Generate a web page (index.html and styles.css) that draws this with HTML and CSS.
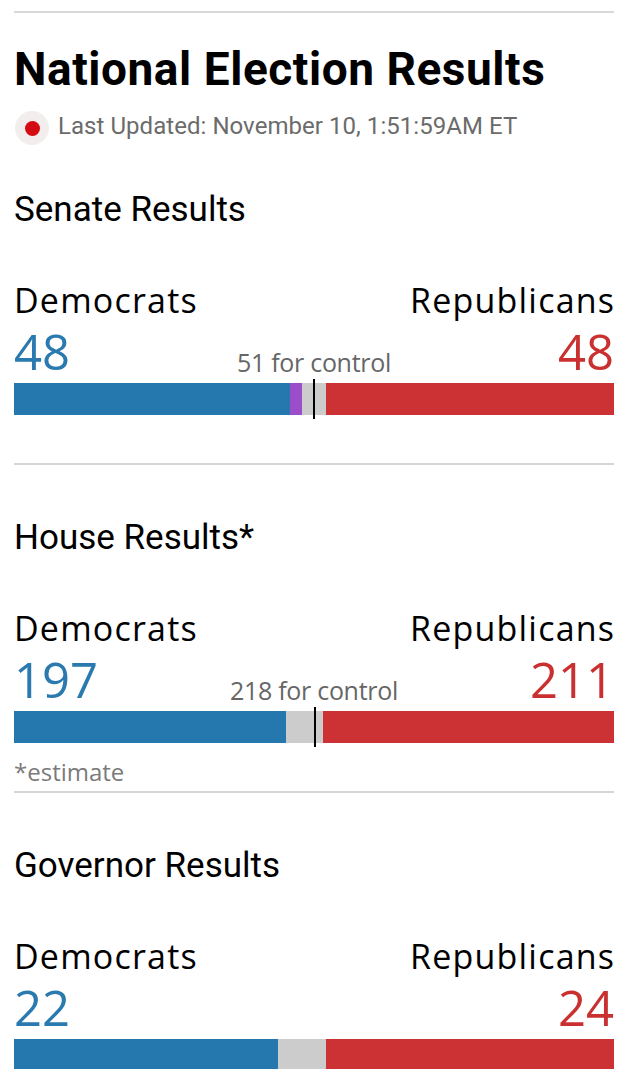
FILE: index.html
```html
<!DOCTYPE html>
<html lang="en">
<head>
<meta charset="utf-8">
<title>National Election Results</title>
<link rel="stylesheet" href="styles.css">
</head>
<body>
<main class="page">
  <div class="top-rule"></div>
  <h1 class="title">National Election Results</h1>
  <div class="updated"><span class="live-dot"></span><span class="updated-text">Last Updated: November 10, 1:51:59AM ET</span></div>

  <section class="race race-first">
    <h2 class="race-title">Senate Results</h2>
    <div class="parties"><span>Democrats</span><span>Republicans</span></div>
    <div class="counts">
      <span class="num dem-num">48</span>
      <span class="control">51 for control</span>
      <span class="num rep-num">48</span>
    </div>
    <div class="bar">
      <span class="seg dem" style="width:46%"></span>
      <span class="seg ind" style="width:2%"></span>
      <span class="seg und" style="width:4%"></span>
      <span class="seg rep" style="width:48%"></span>
      <span class="marker" style="left:50%"></span>
    </div>
  </section>

  <section class="race race-house">
    <h2 class="race-title">House Results*</h2>
    <div class="parties"><span>Democrats</span><span>Republicans</span></div>
    <div class="counts">
      <span class="num dem-num">197</span>
      <span class="control">218 for control</span>
      <span class="num rep-num">211</span>
    </div>
    <div class="bar">
      <span class="seg dem" style="width:45.29%"></span>
      <span class="seg und" style="width:6.21%"></span>
      <span class="seg rep" style="width:48.5%"></span>
      <span class="marker" style="left:50.1%"></span>
    </div>
    <p class="note">*estimate</p>
  </section>

  <section class="race">
    <h2 class="race-title">Governor Results</h2>
    <div class="parties"><span>Democrats</span><span>Republicans</span></div>
    <div class="counts">
      <span class="num dem-num">22</span>
      <span class="control"></span>
      <span class="num rep-num">24</span>
    </div>
    <div class="bar">
      <span class="seg dem" style="width:44%"></span>
      <span class="seg und" style="width:8%"></span>
      <span class="seg rep" style="width:48%"></span>
    </div>
  </section>
</main>
</body>
</html>
```

FILE: styles.css
```css
html, body {
  margin: 0;
  padding: 0;
  background: #ffffff;
}

body {
  font-family: Roboto, "Liberation Sans", Arial, sans-serif;
  color: #000;
}

.page {
  width: 600px;
  margin: 0 0 0 14px;
}

.top-rule {
  margin-top: 11px;
  height: 2px;
  background: #d8d8d8;
}

.title {
  margin: 33px 0 0 0;
  font-family: Roboto, "Liberation Sans", Arial, sans-serif;
  font-weight: 700;
  font-size: 46px;
  line-height: 46px;
  letter-spacing: 0.55px;
  color: #000;
}

.updated {
  display: flex;
  align-items: center;
  margin-top: 19px;
  height: 34px;
}

.live-dot {
  flex: none;
  width: 34px;
  height: 34px;
  border-radius: 50%;
  background: #f2eeee;
  margin-left: 1px;
  margin-right: 9px;
  display: flex;
  align-items: center;
  justify-content: center;
}

.live-dot::after {
  content: "";
  width: 15px;
  height: 15px;
  border-radius: 50%;
  background: #d50b12;
}

.updated-text {
  font-size: 24px;
  line-height: 24px;
  padding-bottom: 4px;
  color: #6b6b6b;
  letter-spacing: 0.05px;
}

.race-title {
  margin: 53px 0 0 0;
  font-family: Roboto, "Liberation Sans", Arial, sans-serif;
  font-weight: 400;
  font-size: 35px;
  line-height: 40px;
  color: #000;
}

.race-first .race-title {
  margin-top: 45px;
}

.race + .race {
  border-top: 2px solid #d6d6d6;
}

.race-first {
  padding-bottom: 48px;
}

.race-house {
  padding-bottom: 5px;
}

.parties {
  display: flex;
  justify-content: space-between;
  margin-top: 52px;
  font-family: "Open Sans", "Noto Sans", sans-serif;
  font-size: 34px;
  line-height: 36px;
  letter-spacing: 1.2px;
  color: #000;
}

.parties span:last-child {
  margin-right: -1.2px;
}

.counts {
  display: grid;
  grid-template-columns: 1fr auto 1fr;
  align-items: end;
  margin-top: 9px;
  height: 48px;
}

.num {
  font-family: "Open Sans", "Noto Sans", sans-serif;
  font-size: 49px;
  line-height: 48px;
}

.dem-num {
  color: #2a7ab0;
  justify-self: start;
}

.rep-num {
  color: #c9302f;
  justify-self: end;
}

.control {
  font-family: "Open Sans", "Noto Sans", sans-serif;
  font-size: 25px;
  line-height: 26px;
  letter-spacing: -0.3px;
  color: #666666;
  text-align: center;
}

.bar {
  position: relative;
  display: flex;
  height: 32px;
  margin-top: 8px;
}

.seg {
  display: block;
  height: 100%;
}

.dem { background: #2478ae; }
.ind { background: #9b4dca; }
.und { background: #cccccc; }
.rep { background: #cc3233; }

.marker {
  position: absolute;
  top: -4px;
  bottom: -4px;
  width: 2px;
  margin-left: -1px;
  background: #000;
}

.note {
  margin: 15px 0 0 0;
  font-family: "Open Sans", "Noto Sans", sans-serif;
  font-size: 24px;
  line-height: 28px;
  color: #7a7a7a;
}
```
